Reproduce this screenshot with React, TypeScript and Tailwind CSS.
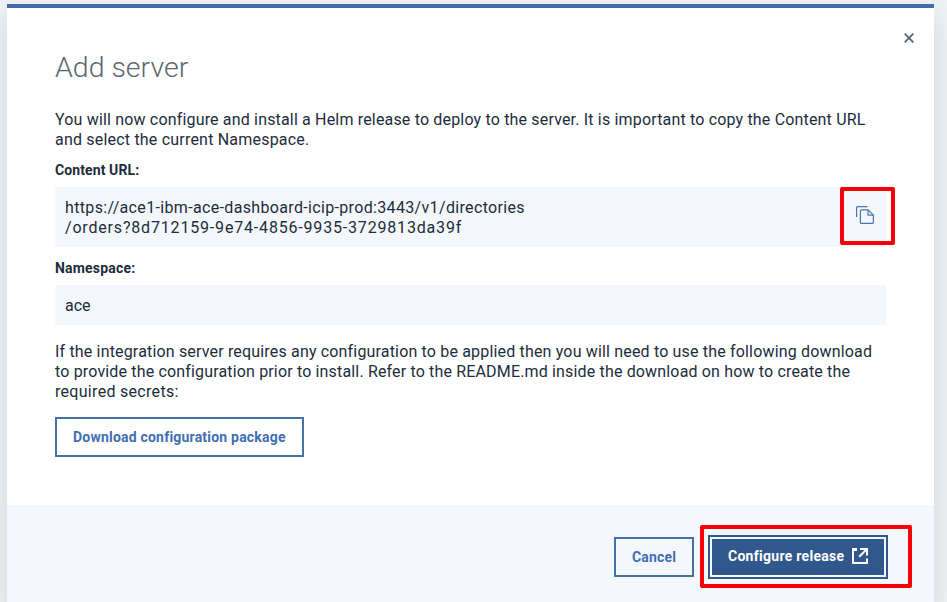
import React from 'react';

function Line({ children, className = '' }: { children: React.ReactNode; className?: string }) {
  return <span className={`block whitespace-nowrap ${className}`}>{children}</span>;
}

function CloseIcon() {
  return (
    <svg width="10" height="10" viewBox="0 0 10 10" fill="none" stroke="#5a6872" strokeWidth="1.9">
      <path d="M0.7 0.7 9.3 9.3M9.3 0.7 0.7 9.3" />
    </svg>
  );
}

function CopyIcon() {
  return (
    <svg width="18" height="18" viewBox="0 0 18 18" fill="none" stroke="#4a76b3" strokeWidth="1.2" strokeLinejoin="round">
      <path d="M0.6 11V1.6Q0.6 0.6 1.6 0.6H11.5" />
      <path d="M5.4 3.8H12L17.4 9.2V16.4Q17.4 17.4 16.4 17.4H5.4Q4.4 17.4 4.4 16.4V4.8Q4.4 3.8 5.4 3.8Z" />
      <path d="M12 3.8V9.2H17.4" />
    </svg>
  );
}

function LaunchIcon() {
  return (
    <svg width="16" height="16" viewBox="0 0 16 16" fill="none" stroke="#fff" strokeWidth="2">
      <path d="M5 1.5H1V15H15V10.5" />
      <path d="M0 0H5V3H0Z" fill="#fff" stroke="none" />
      <path d="M8 1H15V7.5" />
      <path d="M14.6 1.4 7.2 8.8" />
    </svg>
  );
}

export default function App() {
  return (
    <div className="relative h-[602px] w-[947px] overflow-hidden bg-[#eef1f3] pt-1 pl-[7px] font-['Roboto','Liberation_Sans',sans-serif] text-base leading-5 text-[#1d2d3c]">
      <div className="flex h-[598px] w-[927px] flex-col border-t-4 border-[#416cae] bg-white shadow-[0_12px_24px_0_rgba(0,0,0,0.1)]">
        <div className="h-[497px] shrink-0 px-12">
          <div className="flex h-[98px] items-start justify-between">
            <h1 className="mt-[42px] text-[28.5px] leading-9 font-light text-[#5a6872]"><Line>Add server</Line></h1>
            <button aria-label="Close" className="mt-[25px] -mr-7"><CloseIcon /></button>
          </div>
          <p className="mt-1">
            <Line className="tracking-[0.17px]">You will now configure and install a Helm release to deploy to the server. It is important to copy the Content URL</Line>
            <Line className="tracking-[0.2px]">and select the current Namespace.</Line>
          </p>
          <h2 className="mt-[10px] text-sm leading-5 font-bold"><Line className="tracking-[0.1px]">Content URL:</Line></h2>
          <div className="mt-[7px] flex h-[60px] w-[831px] items-center justify-between bg-[#f4f7fb] pr-3 pl-[10px]">
            <div className="pt-0.5">
              <Line className="tracking-[0.34px]">https://ace1-ibm-ace-dashboard-icip-prod:3443/v1/directories</Line>
              <Line className="tracking-[0.82px]">/orders?8d712159-9e74-4856-9935-3729813da39f</Line>
            </div>
            <button aria-label="Copy" className="-mt-1"><CopyIcon /></button>
          </div>
          <h2 className="mt-[11px] text-sm leading-5 font-bold"><Line className="tracking-[0.2px]">Namespace:</Line></h2>
          <div className="mt-[7px] flex h-10 w-[831px] items-center bg-[#f4f7fb] pt-0.5 pl-[10px]"><Line>ace</Line></div>
          <p className="mt-[17px]">
            <Line className="tracking-[0.17px]">If the integration server requires any configuration to be applied then you will need to use the following download</Line>
            <Line className="tracking-[0.16px]">to provide the configuration prior to install. Refer to the README.md inside the download on how to create the</Line>
            <Line className="tracking-[0.3px]">required secrets:</Line>
          </p>
          <button className="mt-[15px] flex h-10 w-[249px] items-center border-2 border-[#4670a8] pl-4 text-sm font-bold text-[#416fb1]"><Line className="tracking-[0.21px]">Download configuration package</Line></button>
        </div>
        <div className="flex grow items-start bg-[#f4f7fb] pl-[607px]">
          <button className="mt-8 flex h-10 w-20 items-center border-2 border-[#4670a8] pl-4 text-sm font-bold text-[#416fb1]"><Line className="tracking-[0.2px]">Cancel</Line></button>
          <button className="mt-[30px] ml-[14px] flex h-11 w-[180px] items-center border-2 border-[#30588c] bg-[#30588c] pl-[18px] text-sm font-bold text-white shadow-[inset_0_0_0_2px_#f4f7fb]">
            <Line className="-mt-0.5 tracking-[0.28px]">Configure release</Line>
            <span className="ml-2 -mt-0.5"><LaunchIcon /></span>
          </button>
        </div>
      </div>
      <div className="absolute top-[187px] left-[840px] h-[58px] w-[55px] rounded-[2px] border-4 border-[#f90006]" />
      <div className="absolute top-[525px] left-[700px] h-[63px] w-[212px] rounded-[2px] border-4 border-[#f90006]" />
    </div>
  );
}
